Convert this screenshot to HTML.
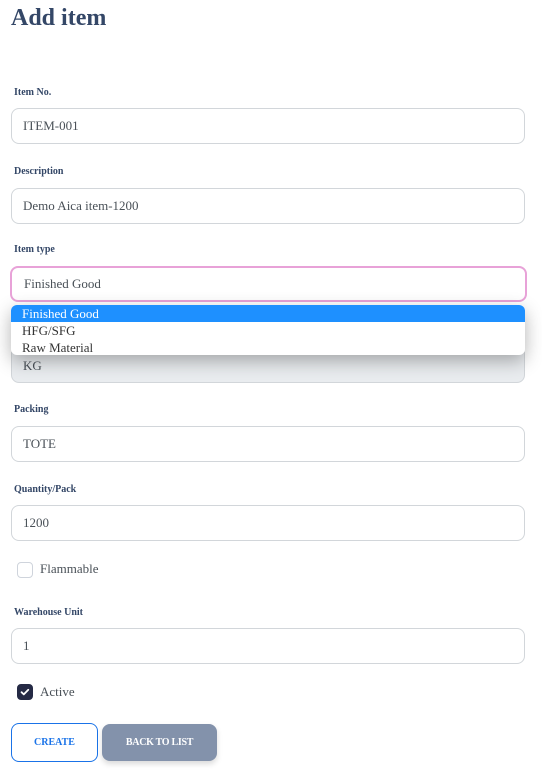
<!DOCTYPE html>
<html><head><style>
body{margin:0;background:#fff;font-family:"Liberation Serif",serif;width:542px;height:774px;position:relative;overflow:hidden}
.a{position:absolute}
h1{position:absolute;left:11px;top:5px;margin:0;font-size:24px;color:#344767;font-weight:bold}
.l{position:absolute;left:14px;font-size:10px;font-weight:bold;color:#344767}
.i{position:absolute;left:11px;height:34px;border:1px solid #d2d6da;border-radius:8px;font-size:13px;color:#495057;line-height:34px;padding-left:11px;box-sizing:content-box;width:501px;background:#fff}
.cb{position:absolute;left:17px;width:14px;height:14px;border:1px solid #cfd4dc;border-radius:4px;background:#fff}
.t{position:absolute;left:40px;font-size:13px;color:#495057}
</style></head><body>
<h1>Add item</h1>
<div class="l" style="top:87px">Item No.</div>
<div class="i" style="top:108px">ITEM-001</div>
<div class="l" style="top:166px">Description</div>
<div class="i" style="top:188px">Demo Aica item-1200</div>
<div class="l" style="top:244px">Item type</div>
<div class="i" style="top:266px;border:2px solid #e8a2d8;height:32px;line-height:32px;left:10px;padding-left:12px">Finished Good</div>
<div class="i" style="top:346px;background:#e9ecef;height:35px;line-height:37px">KG</div>
<div class="a" style="left:11px;top:305px;width:514px;height:50px;background:#fff;border-radius:6px;box-shadow:0 6px 18px rgba(0,0,0,.3);font-size:13px;color:#333;overflow:hidden;line-height:17px">
<div style="background:#1e90ff;color:#fff;padding-left:11px">Finished Good</div>
<div style="padding-left:11px">HFG/SFG</div>
<div style="padding-left:11px">Raw Material</div>
</div>
<div class="l" style="top:404px">Packing</div>
<div class="i" style="top:426px">TOTE</div>
<div class="l" style="top:484px">Quantity/Pack</div>
<div class="i" style="top:505px">1200</div>
<div class="cb" style="top:562px"></div>
<div class="t" style="top:561px">Flammable</div>
<div class="l" style="top:607px">Warehouse Unit</div>
<div class="i" style="top:628px">1</div>
<div class="cb" style="top:684px;background:#252a45;border-color:#252a45"><svg width="14" height="14" viewBox="0 0 14 14"><path d="M3.5 7.2l2.3 2.2 4.5-4.6" stroke="#fff" stroke-width="1.8" fill="none" stroke-linecap="round" stroke-linejoin="round"/></svg></div>
<div class="t" style="top:684px">Active</div>
<div class="a" style="left:11px;top:723px;width:85px;height:37px;border:1px solid #1a73e8;border-radius:8px;color:#1a73e8;font-size:10px;font-weight:bold;text-align:center;line-height:37px">CREATE</div>
<div class="a" style="left:102px;top:724px;width:115px;height:37px;background:#8392ab;border-radius:8px;color:#fff;font-size:10px;font-weight:bold;text-align:center;line-height:37px;box-shadow:0 3px 6px rgba(0,0,0,.15);letter-spacing:-0.3px">BACK TO LIST</div>
</body></html>
